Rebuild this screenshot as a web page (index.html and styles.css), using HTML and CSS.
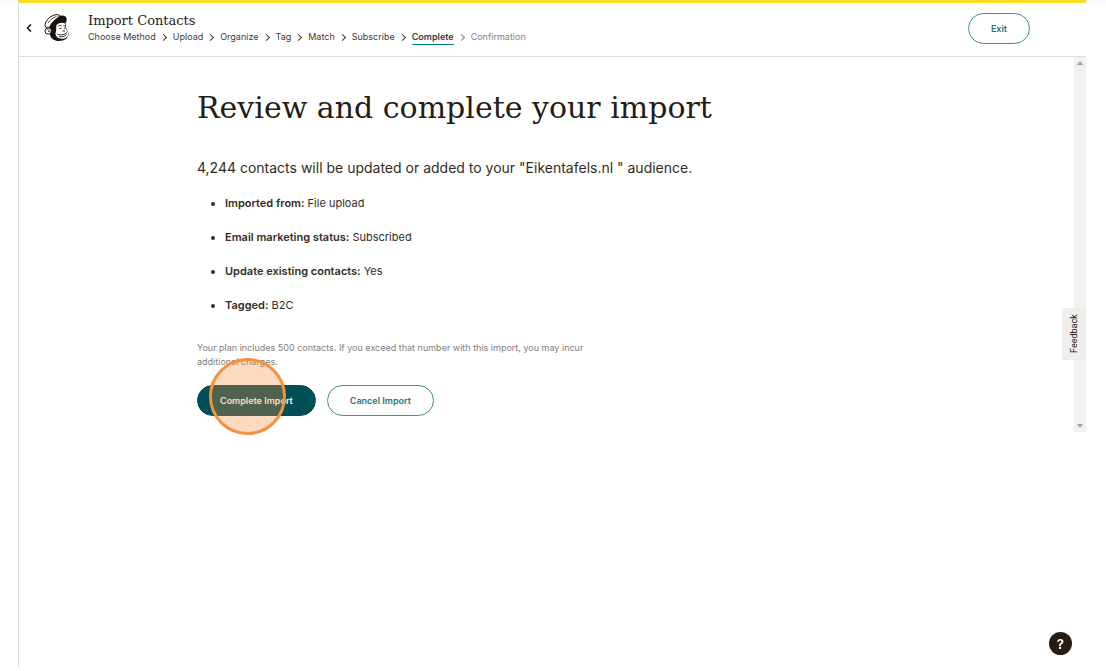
FILE: index.html
```html
<!DOCTYPE html>
<html lang="en">
<head>
<meta charset="utf-8">
<title>Import Contacts</title>
<link rel="stylesheet" href="styles.css">
</head>
<body>
<div class="app">
  <header class="header">
    <button class="back" type="button" aria-label="Back">
      <svg width="6" height="10" viewBox="0 0 6 10"><path d="M5 1.5 1.5 5 5 8.500" fill="none" stroke="currentColor" stroke-width="1.700"/></svg>
    </button>
    <svg class="logo" viewBox="0 0 26 28" width="26" height="28" role="img" aria-label="Logo">
      <path d="M7 10C11 7 17 6 21.500 8l.5 6 2.500 5c.5 5-4 8-9.500 8-5 0-8-2.500-9-6L5 14z" fill="#17130f"/>
      <path d="M1.500 13C0 10 3 5 7 2.500 10 .500 14 0 16 1.500L14 4 8 9l-3 5z" fill="#fff" stroke="#17130f"/>
      <path d="M4 9C6 6 9 3.500 12.500 2.500" fill="none" stroke="#17130f" stroke-width=".7"/>
      <path d="M13 4c2-2.500 6-3.500 8.500-1.500 1.500 1.500 1.500 4 .5 6-4-1.500-8-.5-11 2l-3 4c-2-4 1-8 5-10.500z" fill="#17130f"/>
      <path d="M12.500 11c2.500-2.500 6-2.700 8.500-1.500l.5 5 2.500 4c1 4-2 6.500-6 6.300-4-.3-7-2.500-6.500-6 1.500-2.300 0-5 1-7.800z" fill="#fff"/>
      <path d="M14.500 12.200c1-.8 2-.8 3-.4m2 0 1.500.2M15.500 14.500l2-.3m2.500 0 1 .2M18.500 17h2.500M13 20c3 1.500 7 1 10-1.500M15 22.500c3 .8 6 0 7.500-2" fill="none" stroke="#17130f" stroke-width=".9"/>
      <circle cx="4.200" cy="17" r="3.200" fill="#fff" stroke="#17130f"/>
      <path d="M3 15.800c2-.5 2.800.5 2.200 2.200L4 17.300" fill="none" stroke="#17130f" stroke-width=".7"/>
    </svg>
    <div class="heading">
      <div class="name">Import Contacts</div>
      <nav aria-label="Import steps">
        <ol class="steps">
          <li>Choose Method</li>
          <li>Upload</li>
          <li>Organize</li>
          <li>Tag</li>
          <li>Match</li>
          <li>Subscribe</li>
          <li class="current" aria-current="step"><span>Complete</span></li>
          <li class="next">Confirmation</li>
        </ol>
      </nav>
    </div>
    <button class="button exit" type="button">Exit</button>
  </header>
  <div class="view">
    <main class="content">
      <h1>Review and complete your import</h1>
      <p class="lead">4,244 contacts will be updated or added to your "Eikentafels.nl " audience.</p>
      <ul class="facts">
        <li><b>Imported from:</b> File upload</li>
        <li><b>Email marketing status:</b> Subscribed</li>
        <li><b>Update existing contacts:</b> Yes</li>
        <li><b>Tagged:</b> B2C</li>
      </ul>
      <p class="note">Your plan includes 500 contacts. If you exceed that number with this import, you may incur additional charges.</p>
      <div class="actions">
        <button class="button primary" type="button">Complete Import<span class="pointer"></span></button>
        <button class="button" type="button">Cancel Import</button>
      </div>
    </main>
    <div class="scrollbar" aria-hidden="true">
      <svg width="6" height="4" viewBox="0 0 6 4"><path d="M3 0 6 4H0z" fill="#a0a0a0"/></svg>
      <svg width="6" height="4" viewBox="0 0 6 4"><path d="M0 0h6L3 4z" fill="#a0a0a0"/></svg>
    </div>
    <button class="feedback" type="button">Feedback</button>
  </div>
</div>
<button class="help" type="button" aria-label="Help">?</button>
</body>
</html>
```
FILE: styles.css
```css
* { box-sizing: border-box; }

body {
  margin: 0;
  min-height: 100vh;
  padding: 0 20px 4px 18px;
  display: flex;
  background: linear-gradient(#f8f8f8, #fff 8px);
  color: #241c15;
  font-family: Inter, "Liberation Sans", sans-serif;
}

button {
  font: inherit;
  cursor: pointer;
}

.app {
  flex: 1;
  border-top: 3px solid #f8dc24;
  border-left: 1px solid #dcdcdc;
  background: #fff;
}

.header {
  display: flex;
  align-items: center;
  height: 54px;
  padding: 0 56px 3px 7px;
  border-bottom: 1px solid #dcdcdc;
}

.back {
  display: flex;
  padding: 0;
  border: 0;
  background: none;
  color: #241c15;
}

.logo { margin: 0 18px 0 12px; }

.heading { flex: 1; }

.name {
  font: 13px/18px "DejaVu Serif", serif;
}

.steps {
  display: flex;
  margin: 0;
  padding: 0;
  list-style: none;
  color: #3f3933;
  font-size: 9px;
  line-height: 14px;
}

.steps li {
  display: flex;
  align-items: center;
}

.steps li + li::before {
  content: "";
  width: 4px;
  height: 4px;
  margin: 0 7px 0 5px;
  border: solid currentColor;
  border-width: 1px 1px 0 0;
  transform: rotate(45deg);
}

.current { font-weight: 600; }

.current span { box-shadow: 0 1px #007c89; }

.steps .next { color: #84807c; }

.button {
  position: relative;
  height: 31px;
  padding: 0 22px;
  border: 1px solid #3d8f97;
  border-radius: 16px;
  background: #fff;
  color: #1c7680;
  font-size: 9px;
  font-weight: 600;
}

.view {
  position: relative;
  display: flex;
  justify-content: space-between;
}

.content {
  padding: 30px 20px 16px 178px;
}

h1 {
  margin: 0;
  font: 30px/42px "DejaVu Serif", serif;
}

.lead {
  margin: 29px 0 15px;
  color: #332c26;
  font-size: 14px;
  line-height: 20px;
}

.facts {
  display: grid;
  gap: 14px;
  margin: 0 0 26px;
  padding-left: 28px;
  color: #332c26;
  font-size: 11px;
  line-height: 20px;
}

.facts b { font-weight: 600; }

.note {
  max-width: 400px;
  margin: 0 0 16px;
  color: #827e7a;
  font-size: 9px;
  line-height: 14px;
}

.actions {
  display: flex;
  gap: 11px;
}

.primary {
  border-color: #004e56;
  background: #004e56;
  color: #fff;
}

.pointer {
  position: absolute;
  top: -28px;
  left: 11px;
  width: 77px;
  height: 77px;
  border: 3px solid #f3923f;
  border-radius: 50%;
  background: rgba(246, 140, 60, .32);
}

.scrollbar {
  display: flex;
  flex-direction: column;
  align-items: center;
  justify-content: space-between;
  width: 12px;
  padding: 4px 0;
  background: #f1f1f1;
}

.feedback {
  position: absolute;
  top: 251px;
  right: 0;
  width: 24px;
  height: 52px;
  padding: 0;
  border: 0;
  background: #efeeea;
  color: #241c15;
  font: 9px/24px Roboto, sans-serif;
  writing-mode: vertical-rl;
  transform: rotate(180deg);
}

.help {
  position: fixed;
  right: 34px;
  bottom: 16px;
  width: 23px;
  height: 23px;
  padding: 0;
  border: 0;
  border-radius: 50%;
  background: #241c15;
  color: #fff;
  font-size: 13px;
  font-weight: 700;
}
```
